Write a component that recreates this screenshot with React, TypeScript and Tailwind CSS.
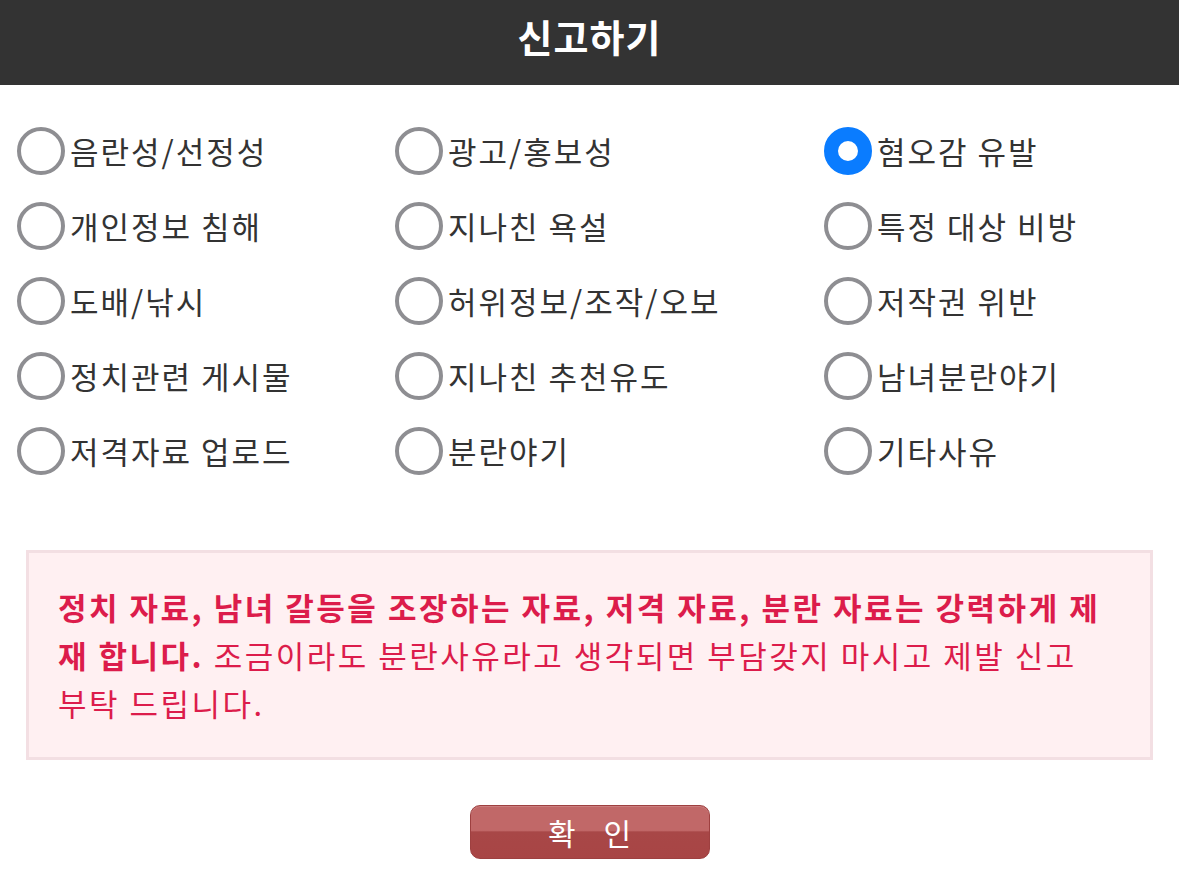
import { useState } from 'react';

const reasons = [
  '음란성/선정성', '광고/홍보성', '혐오감 유발',
  '개인정보 침해', '지나친 욕설', '특정 대상 비방',
  '도배/낚시', '허위정보/조작/오보', '저작권 위반',
  '정치관련 게시물', '지나친 추천유도', '남녀분란야기',
  '저격자료 업로드', '분란야기', '기타사유',
];

function Radio({ checked }: { checked: boolean }) {
  return checked ? (
    <span className="block h-[48px] w-[48px] shrink-0 rounded-full border-[14px] border-[#0a7cff] bg-white" />
  ) : (
    <span className="block h-[48px] w-[48px] shrink-0 rounded-full border-[4px] border-[#8e8e92] bg-white" />
  );
}

export default function App() {
  const [selected, setSelected] = useState('혐오감 유발');

  return (
    <div className="min-h-screen bg-white font-['Noto_Sans_CJK_KR',sans-serif] text-[#333]">
      <header className="flex h-[85px] items-center justify-center bg-[#333] pb-[14px]">
        <h1 className="text-[38px] font-bold leading-none tracking-[1px] text-white">신고하기</h1>
      </header>

      {/* 신고 사유 */}
      <div className="grid grid-cols-[378px_429px_1fr] pl-[17px] pt-[28px]">
        {reasons.map((r) => (
          <label
            key={r}
            className="flex h-[75px] cursor-pointer items-center gap-[5px]"
            onClick={() => setSelected(r)}
          >
            <Radio checked={selected === r} />
            <span className="text-[31px] leading-none tracking-[2px]">{r}</span>
          </label>
        ))}
      </div>

      <div className="mx-[26px] mt-[62px] border-[3px] border-[#f3dfe3] bg-[#fff0f2] px-[29px] py-[30px] text-[31px] leading-[48px] tracking-[2.5px] text-[#dc1c4b]">
        <b>
          정치 자료, 남녀 갈등을 조장하는 자료, 저격 자료, 분란 자료는 강력하게 제<br />재 합니다.
        </b>{' '}
        조금이라도 분란사유라고 생각되면 부담갖지 마시고 제발 신고
        <br />
        부탁 드립니다.
      </div>

      <div className="mt-[45px] flex justify-center">
        <button className="h-[54px] w-[240px] rounded-[10px] border border-[#9e4040] bg-[linear-gradient(to_bottom,#c16868_0%,#c16868_47%,#a84747_50%,#a84545_100%)] text-[30px] leading-none tracking-[28px] text-white shadow-[inset_0_1px_0_rgba(255,255,255,0.15)]">
          <span className="pl-[28px]">확인</span>
        </button>
      </div>
    </div>
  );
}
